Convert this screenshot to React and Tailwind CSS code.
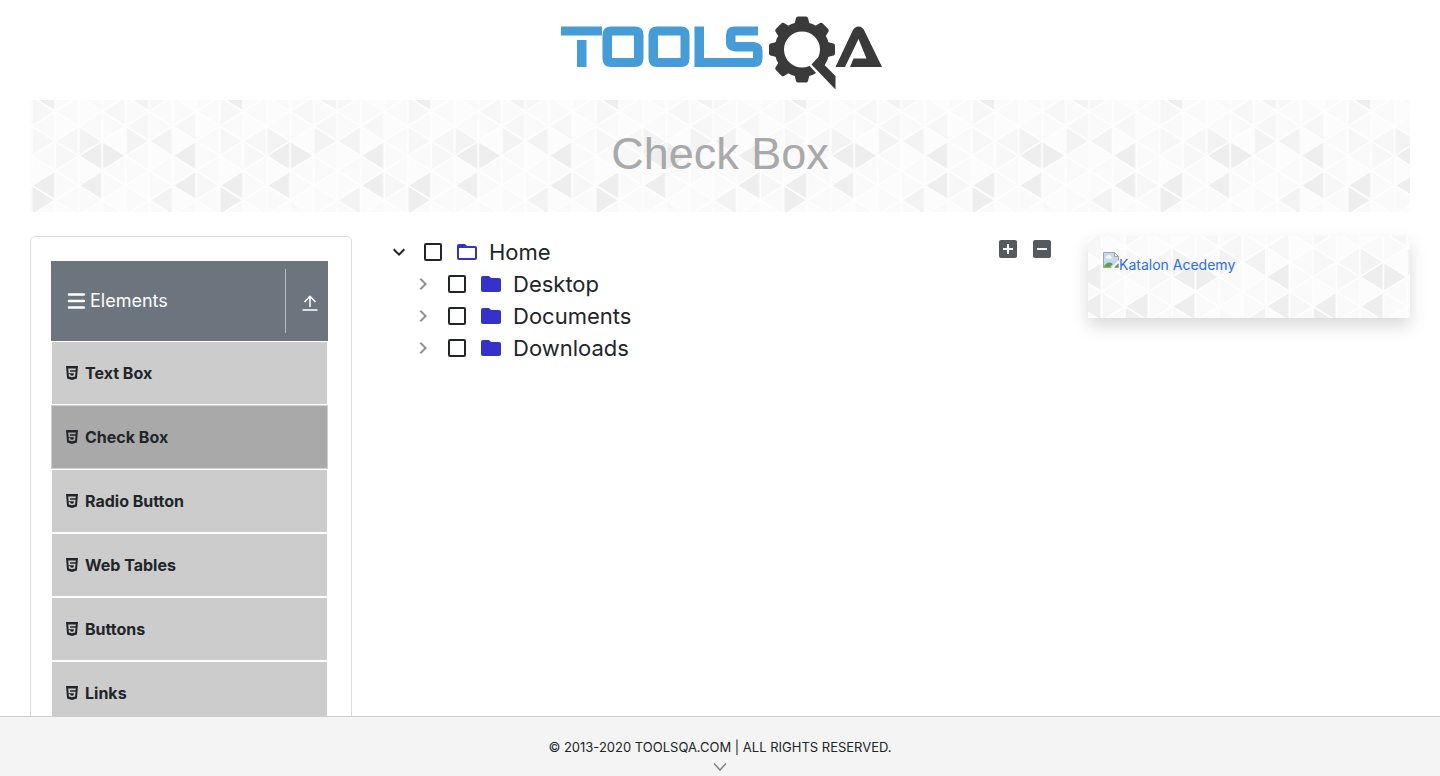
import { MdAddBox, MdIndeterminateCheckBox, MdKeyboardArrowDown, MdChevronRight, MdFolder, MdFolderOpen } from "react-icons/md";
import { IoLogoHtml5 } from "react-icons/io5";

const FONT = "font-['Inter','Liberation_Sans',sans-serif]";

/* Triangle mosaic: columns 23.5 wide, vertical edges 29.6 tall, alternate columns shifted by half an edge. */
const COL = 23.5;
const EDGE = 29.6;
const SHADES = ["#fcfcfc", "#fafafa", "#f7f7f7", "#f3f3f3", "#eeeeee"];
/* Per strip, shade of each half-step triangle from the top down. */
const MOSAIC = ["4212104410", "1102211100", "1013404101", "1210411010", "3123110110", "2113011310", "0120414011", "1101112101"];

function facets() {
  const out = [];
  MOSAIC.forEach((strip, k) => {
    for (let i = 0; i < strip.length; i++) {
      const mid = -3.3 + i * (EDGE / 2);
      const pointsLeft = (i + k) % 2 === 0;
      const near = k * COL;
      const far = near + COL;
      const edge = pointsLeft ? far : near;
      const apex = pointsLeft ? near : far;
      out.push(
        <path
          key={`${k}-${i}`}
          d={`M${edge} ${mid - EDGE / 2}L${edge} ${mid + EDGE / 2}L${apex} ${mid}Z`}
          fill={SHADES[Number(strip[i])]}
        />
      );
    }
  });
  return out;
}

function Mosaic({ id, x, y }) {
  return (
    <svg className="absolute inset-0 h-full w-full" aria-hidden="true">
      <defs>
        <pattern id={id} x={x} y={y} width={COL * 8} height="148" patternUnits="userSpaceOnUse">
          <g stroke="#fefefe" strokeWidth="1.6" strokeLinejoin="round">{facets()}</g>
        </pattern>
      </defs>
      <rect width="100%" height="100%" fill={`url(#${id})`} />
    </svg>
  );
}

function Logo() {
  const teeth = [0, 45, 90, 180, 225, 270, 315];
  return (
    <svg width="324" height="76" viewBox="560 15 324 76" role="img" aria-label="Tools QA">
      <g fill="#459cd7">
        <path d="M561 26.500h41v9h-41zM577 40h9.500v27H577z" />
        <path fillRule="evenodd" d="M611 26.500h24q8.500 0 8.500 8.500v23.500q0 8.500-8.500 8.500h-24q-8.500 0-8.500-8.500V35q0-8.500 8.500-8.500zM612 35.500v22.500h22V35.500z" />
        <path fillRule="evenodd" d="M657 26.500h24q8.500 0 8.500 8.500v23.500q0 8.500-8.500 8.500h-24q-8.500 0-8.500-8.500V35q0-8.500 8.500-8.500zM658 35.500v22.500h22.500V35.500z" />
        <path d="M694.500 26.500h9.500v31.500h49v-6.500H735q-9-1-9-8.500v-8q0-8.500 8.500-8.500h23.500v9H735.500v6.500H754q8.500 1 8.500 8.500v8q0 8.500-8.500 8.500h-59.500z" />
      </g>
      <g fill="#3a3a3a">
        {teeth.map((a) => (
          <path key={a} transform={`rotate(${a} 802 49.500)`} d="M794.500 24l1.500-6q.5-1.500 2-1.500h8q1.500 0 2 1.500l1.500 6z" />
        ))}
        <path fillRule="evenodd" d="M802 22a27.500 27.500 0 1 0 0 55a27.500 27.500 0 1 0 0-55zM802 31.500a18 18 0 1 1 0 36a18 18 0 1 1 0-36z" />
      </g>
      <path d="M808 64l7-8 23 23v14h-4z" fill="#ffffff" />
      <path d="M811.500 64.500l6-6.500 18 18v13.500z" fill="#3a3a3a" />
      <path d="M835.500 67l17-36q2-4.500 6-4.500t6 4.500l17.500 36h-32l3.500-8.500h13l-8-19.500-13.500 28z" fill="#3a3a3a" />
    </svg>
  );
}

function BrokenImage() {
  return (
    <svg width="16" height="16" viewBox="0 0 16 16" className="shrink-0" aria-hidden="true">
      <path d="M.5.500h11l4 4v11H.500z" fill="#c6d6f5" stroke="#a3a3a3" />
      <path d="M3 6.500a1.500 1.500 0 0 1 1-2.500a2 2 0 0 1 3.500 0a1.300 1.300 0 0 1 .5 2.500z" fill="#fff" />
      <path d="M1 15q1-4 5-4.500q3 0 4 1.500l-3 3z" fill="#56a845" />
      <path d="M11.500.500v4h4z" fill="#f4f4f4" stroke="#a3a3a3" />
      <path d="M8 16l8-8v3l-5 5z" fill="#fff" />
      <path d="M11.500 15l3.500-3.500V15z" fill="#56a845" />
    </svg>
  );
}

const MENU = ["Text Box", "Check Box", "Radio Button", "Web Tables", "Buttons", "Links"];

function Sidebar() {
  return (
    <aside className="rounded-[5px] border border-[#dddddd] py-6 pl-5 pr-[23px]">
      <button type="button" className="flex h-20 w-full items-center bg-[#6c757d] text-white">
        <span className="flex flex-1 items-center gap-[5px] pl-4">
          <svg width="18" height="16" viewBox="0 0 18 16" aria-hidden="true">
            <path d="M2 1.500h15M2 8h15M2 14.500h15" stroke="currentColor" strokeWidth="2.500" strokeLinecap="round" />
          </svg>
          <span className="text-[18px] leading-6">Elements</span>
        </span>
        <span className="flex h-16 w-[43px] items-center border-l border-[#b9bdc1] pl-4">
          <svg width="16" height="16" viewBox="0 0 16 16" className="mt-1" fill="none" stroke="currentColor" strokeWidth="1.500" aria-hidden="true">
            <path d="M8 12V1.500M2.500 7L8 1.300L13.500 7M.5 15h15" />
          </svg>
        </span>
      </button>
      <ul>
        {MENU.map((name) => (
          <li key={name}>
            <button
              type="button"
              className={
                "flex h-16 w-full items-center gap-[5px] border px-3 text-[#212529] " +
                (name === "Check Box" ? "border-[#ccd1d6] bg-[#a9a9a9]" : "border-white bg-[#cccccc]")
              }
            >
              <IoLogoHtml5 size={16} aria-hidden="true" />
              <span className="text-[16px] font-bold leading-6">{name}</span>
            </button>
          </li>
        ))}
      </ul>
    </aside>
  );
}

function TreeRow({ label, open }) {
  const Folder = open ? MdFolderOpen : MdFolder;
  const Arrow = open ? MdKeyboardArrowDown : MdChevronRight;
  return (
    <div className="flex h-8 items-center">
      <button type="button" aria-label={`Toggle ${label}`} className={"flex w-[34px] justify-center " + (open ? "text-[#212529]" : "text-[#909294]")}>
        <Arrow size={24} />
      </button>
      <label className="flex items-center">
        <span className="flex w-[34px] justify-center">
          <input type="checkbox" className="size-[18px] appearance-none rounded-[2px] border-2 border-[#212529] bg-white" />
        </span>
        <span className="flex w-[34px] justify-center text-[#3333cc]">
          <Folder size={24} aria-hidden="true" />
        </span>
        <span className="px-[5px] text-[22px] leading-8 text-[#212529]">{label}</span>
      </label>
    </div>
  );
}

export default function App() {
  return (
    <div className={"flex h-screen flex-col overflow-hidden bg-white text-[#212529] " + FONT}>
      <div className="min-h-0 flex-1 overflow-hidden">
        <header className="flex h-[100px] justify-center pl-1 pt-[15px]">
          <a href="#home" className="block h-[76px]">
            <Logo />
          </a>
        </header>
        <div className="px-[30px]">
          <div className="relative mb-6 flex h-28 items-center justify-center">
            <Mosaic id="banner-mosaic" x={1.700} y={0} />
            <h1 className="relative pb-1 font-['Liberation_Sans',sans-serif] text-[45px] font-normal leading-[58px] text-[#a9a9a9]">Check Box</h1>
          </div>
          <div className="grid grid-cols-[161fr_338fr_161fr] items-start gap-[30px]">
            <Sidebar />
            <main className="flex items-start">
              <ul className="flex-1">
                <li>
                  <TreeRow label="Home" open />
                  <ul className="pl-6">
                    <li><TreeRow label="Desktop" /></li>
                    <li><TreeRow label="Documents" /></li>
                    <li><TreeRow label="Downloads" /></li>
                  </ul>
                </li>
              </ul>
              <div className="flex gap-[2px] pt-px text-[#555a5e]">
                <button type="button" aria-label="Expand all" className="flex w-8 justify-center">
                  <MdAddBox size={24} />
                </button>
                <button type="button" aria-label="Collapse all" className="flex w-8 justify-center">
                  <MdIndeterminateCheckBox size={24} />
                </button>
              </div>
            </main>
            <aside className="relative h-[82px] shadow-[0_8px_16px_rgba(0,0,0,0.15)]">
              <Mosaic id="card-mosaic" x={37} y={-15} />
              <a href="#katalon" className="relative flex items-start pl-[15px] pt-4 text-[#2a6df4]">
                <BrokenImage />
                <span className="pt-1 text-[14px] leading-[18px]">Katalon Acedemy</span>
              </a>
            </aside>
          </div>
        </div>
      </div>
      <footer className="flex h-[60px] shrink-0 flex-col items-center border-t border-[#cccccc] bg-[#f4f4f4] pt-5">
        <p className="text-[13px] leading-5">© 2013-2020 TOOLSQA.COM | ALL RIGHTS RESERVED.</p>
        <svg width="14" height="8" viewBox="0 0 14 8" className="mt-[6px]" fill="none" stroke="#777777" strokeWidth="1.200" aria-hidden="true">
          <path d="M1 .5L7 7l6-6.500" />
        </svg>
      </footer>
    </div>
  );
}
